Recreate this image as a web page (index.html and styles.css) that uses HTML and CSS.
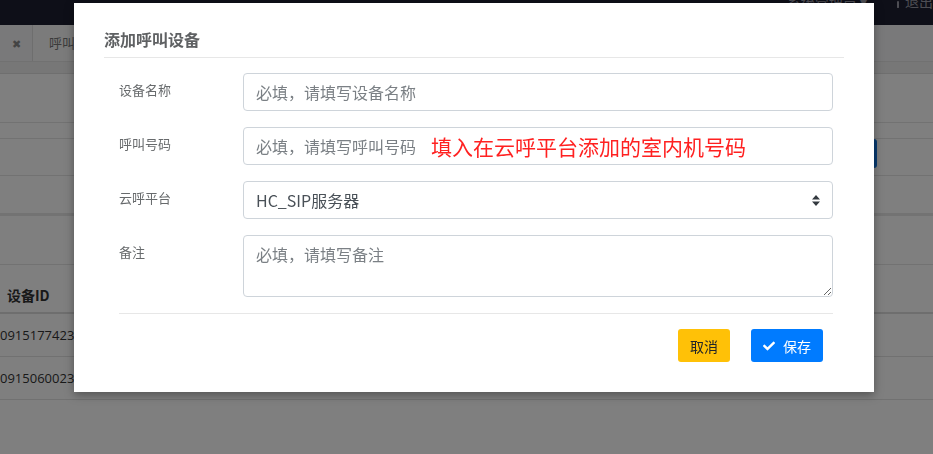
FILE: index.html
```html
<!DOCTYPE html>
<html lang="zh-CN">
<head>
<meta charset="utf-8">
<title>添加呼叫设备</title>
<link rel="stylesheet" href="styles.css">
</head>
<body>
<div class="page">
  <header class="topbar">
    <span class="user">系统管理员 ▾</span>
    <span class="logout"><span class="dot"></span>退出</span>
  </header>
  <nav class="tabs">
    <span class="tab-close">✖</span>
    <span class="tab">呼叫设备</span>
  </nav>
  <div class="strip"></div>
  <div class="band h48"></div>
  <div class="band h15"></div>
  <div class="band h36 with-btn"><span class="bg-btn"></span></div>
  <div class="band h37 gap-bottom"></div>
  <div class="band h46"></div>
  <div class="thead"><span class="th">设备ID</span></div>
  <div class="trow"><span class="td">091517742305</span></div>
  <div class="trow"><span class="td">091506002305</span></div>
</div>

<div class="backdrop"></div>

<div class="modal">
  <div class="modal-header">
    <h4 class="modal-title">添加呼叫设备</h4>
  </div>
  <div class="modal-body">
    <div class="form-row">
      <label class="form-label">设备名称</label>
      <div class="field"><input class="form-control" placeholder="必填，请填写设备名称"></div>
    </div>
    <div class="form-row">
      <label class="form-label">呼叫号码</label>
      <div class="field">
        <input class="form-control" placeholder="必填，请填写呼叫号码">
        <span class="annotation">填入在云呼平台添加的室内机号码</span>
      </div>
    </div>
    <div class="form-row">
      <label class="form-label">云呼平台</label>
      <div class="field">
        <select class="form-control select"><option>HC_SIP服务器</option></select>
        <svg class="select-arrow" width="8" height="11" viewBox="0 0 8 11"><path d="M4 0L8 4.5H0z M4 11L0 6.5H8z" fill="#343a40"/></svg>
      </div>
    </div>
    <div class="form-row">
      <label class="form-label">备注</label>
      <div class="field"><textarea class="form-control textarea" rows="2" placeholder="必填，请填写备注"></textarea></div>
    </div>
  </div>
  <div class="modal-footer">
    <button class="btn btn-warning">取消</button>
    <button class="btn btn-primary"><svg class="check" width="12" height="12" viewBox="0 0 512 512"><path fill="#fff" d="M173.9 439.4l-166.4-166.4c-10-10-10-26.2 0-36.2l36.2-36.2c10-10 26.2-10 36.2 0L192 312.7 432.1 72.6c10-10 26.2-10 36.2 0l36.2 36.2c10 10 10 26.2 0 36.2l-294.4 294.4c-10 10-26.2 10-36.2 0z"/></svg>保存</button>
  </div>
</div>
</body>
</html>
```

FILE: styles.css
```css
html, body {
  margin: 0;
  padding: 0;
}
body {
  width: 933px;
  height: 454px;
  overflow: hidden;
  position: relative;
  font-family: "Noto Sans CJK SC", "Open Sans", sans-serif;
  background: #fff;
}

/* background page */
.page {
  width: 933px;
}
.topbar {
  height: 25px;
  background: #1d1f30;
  display: flex;
  justify-content: flex-end;
  align-items: flex-start;
  gap: 30px;
  color: #9a9aa6;
  font-size: 14px;
  overflow: hidden;
}
.user {
  margin-top: -9px;
  line-height: 20px;
}
.logout {
  margin-top: -9px;
  line-height: 20px;
  display: flex;
  align-items: flex-end;
  gap: 6px;
  width: 36px;
  white-space: nowrap;
}
.dot {
  display: inline-block;
  width: 10px;
  height: 7px;
  border-radius: 5px 5px 2px 2px;
  background: #9a9aa6;
  margin-bottom: 3px;
}
.tabs {
  height: 36px;
  background: #f3f3f4;
  display: flex;
  border-bottom: 1px solid #e2e2e2;
}
.tab-close {
  width: 32px;
  text-align: center;
  line-height: 36px;
  font-size: 11px;
  color: #888;
}
.tab {
  border-left: 1px solid #dcdcdc;
  padding: 0 16px;
  line-height: 36px;
  font-size: 13px;
  color: #777;
  background: #f6f6f6;
}
.strip {
  height: 11px;
  background: #eeeeee;
  border-bottom: 1px solid #dedede;
}
.band {
  background: #fff;
  border-bottom: 1px solid #e4e4e4;
}
.h48 { height: 48px; }
.h15 { height: 15px; }
.h36 { height: 36px; }
.h37 { height: 37px; }
.h46 { height: 48px; }
.with-btn {
  display: flex;
  justify-content: flex-end;
  padding-right: 56px;
}
.bg-btn {
  width: 60px;
  height: 29px;
  background: #0f74e0;
  border-radius: 3px;
}
.gap-bottom {
  border-bottom: 3px solid #e6e6e6;
}
.thead {
  height: 49px;
  border-bottom: 2px solid #dcdcdc;
  display: flex;
  align-items: center;
  padding-left: 7px;
  padding-top: 12px;
  box-sizing: border-box;
}
.th {
  font-weight: bold;
  font-size: 14px;
  color: #333;
}
.trow {
  height: 42px;
  border-bottom: 1px solid #e2e2e2;
  display: flex;
  align-items: center;
}
.td {
  font-family: "Open Sans", sans-serif;
  font-size: 13px;
  color: #333;
}

/* overlay */
.backdrop {
  position: fixed;
  inset: 0;
  background: rgba(0, 0, 0, 0.5);
}

/* modal */
.modal {
  position: absolute;
  left: 74px;
  top: 3px;
  width: 800px;
  box-sizing: border-box;
  background: #fff;
  padding: 0 30px 30px;
  box-shadow: 0 3px 9px rgba(0, 0, 0, 0.35);
}
.modal-header {
  padding: 25px 0 7px;
  border-bottom: 1px solid #e7e7e7;
}
.modal-title {
  margin: 0;
  font-size: 16px;
  font-weight: bold;
  line-height: 22px;
  color: #5f6163;
}
.modal-body {
  padding: 15px 11px 0 15px;
}
.form-row {
  display: flex;
  margin-bottom: 16px;
}
.form-label {
  width: 124px;
  flex: none;
  font-size: 13px;
  line-height: 18px;
  padding-top: 8px;
  color: #676a6c;
}
.field {
  flex: 1;
  position: relative;
  display: flex;
}
.form-control {
  width: 100%;
  height: 38px;
  box-sizing: border-box;
  border: 1px solid #ced4da;
  border-radius: 4px;
  padding: 6px 12px;
  font-family: "Noto Sans CJK SC", "Open Sans", sans-serif;
  font-size: 16px;
  line-height: 24px;
  color: #495057;
  background: #fff;
  margin: 0;
}
.form-control::placeholder {
  color: #7b8085;
}
.select {
  appearance: none;
  -webkit-appearance: none;
  padding-right: 30px;
}
.select-arrow {
  position: absolute;
  right: 13px;
  top: 14px;
  pointer-events: none;
}
.textarea {
  height: 62px;
  resize: vertical;
  display: block;
}
.annotation {
  position: absolute;
  left: 188px;
  top: 6px;
  font-size: 21px;
  line-height: 26px;
  color: #ff2121;
  white-space: nowrap;
}
.modal-footer {
  margin: 0 11px 0 15px;
  border-top: 1px solid #e7e7e7;
  padding: 15px 10px 0 0;
  display: flex;
  justify-content: flex-end;
  gap: 21px;
}
.btn {
  height: 33px;
  border: none;
  border-radius: 3px;
  padding: 0 12px;
  font-family: "Noto Sans CJK SC", sans-serif;
  font-size: 14px;
  display: flex;
  align-items: center;
  gap: 8px;
  cursor: pointer;
}
.btn-warning {
  background: #ffc107;
  color: #212529;
}
.btn-primary {
  background: #007bff;
  color: #fff;
}
.check {
  display: block;
}
```
